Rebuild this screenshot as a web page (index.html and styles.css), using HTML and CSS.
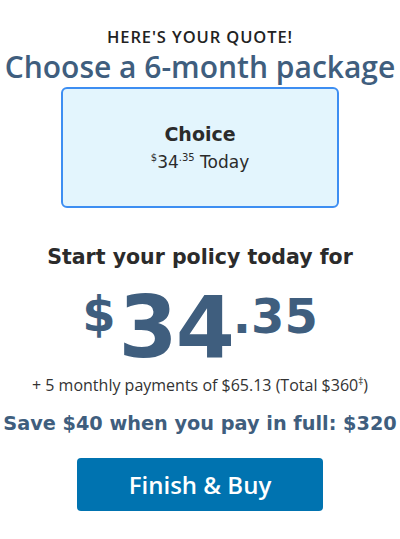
FILE: index.html
```html
<!DOCTYPE html>
<html lang="en">
<head>
	<meta charset="UTF-8">
	<title>Your Quote</title>
	<link rel="stylesheet" href="styles.css">
</head>
<body>
	<div id="quote">
		<div class="eyebrow">HERE'S YOUR QUOTE!</div>
		<h1 class="title">Choose a 6-month package</h1>

		<div class="package selected">
			<div class="package-name">Choice</div>
			<div class="package-price"><sup>$</sup>34<sup>.35</sup> Today</div>
		</div>

		<div class="start-msg">Start your policy today for</div>
		<div class="big-price"><span class="cur">$</span><span class="dollars">34</span><span class="cents">.35</span></div>
		<div class="payments">+ 5 monthly payments of $65.13 (Total $360<sup>&Dagger;</sup>)</div>
		<div class="save-msg">Save $40 when you pay in full: $320</div>

		<button class="buy-btn">Finish &amp; Buy</button>
	</div>
</body>
</html>
```

FILE: styles.css
```css
body {
	margin: 0;
	background: #ffffff;
}

#quote {
	display: flex;
	flex-direction: column;
	align-items: center;
	padding-top: 26px;
	text-align: center;
}

.eyebrow {
	font-family: "Open Sans", sans-serif;
	font-size: 16.5px;
	font-weight: 600;
	letter-spacing: 0.9px;
	color: #222222;
	line-height: 22px;
}

.title {
	margin: -1px 0 0 0;
	font-family: "Open Sans", sans-serif;
	font-size: 30px;
	font-weight: 600;
	color: #3f5e7e;
	line-height: 40px;
	white-space: nowrap;
}

.package {
	box-sizing: border-box;
	width: 278px;
	height: 121px;
	display: flex;
	flex-direction: column;
	justify-content: center;
	border: 2px solid #3d8ef2;
	border-radius: 6px;
	background: #e3f5fd;
	font-family: "DejaVu Sans", sans-serif;
	color: #2b2b2b;
}

.package-name {
	font-size: 19px;
	font-weight: bold;
	line-height: 24px;
}

.package-price {
	font-size: 17px;
	line-height: 24px;
}

.package-price sup {
	font-size: 10px;
}

.start-msg {
	margin-top: 35px;
	font-family: "DejaVu Sans", sans-serif;
	font-size: 20.5px;
	font-weight: bold;
	color: #2b2b2b;
	line-height: 28px;
}

.big-price {
	margin-top: 14px;
	font-family: "DejaVu Sans", sans-serif;
	font-weight: bold;
	color: #3f5e7e;
	display: flex;
	align-items: flex-start;
	line-height: 1;
}

.big-price .cur {
	font-size: 48px;
	margin-top: 5px;
	margin-right: 3px;
}

.big-price .dollars {
	font-size: 85px;
	letter-spacing: -2px;
}

.big-price .cents {
	font-size: 48px;
	margin-top: 7px;
}

.payments {
	margin-top: 0;
	font-family: "Open Sans", sans-serif;
	font-size: 16px;
	color: #333333;
	line-height: 22px;
}

.payments sup {
	font-size: 10px;
}

.save-msg {
	margin-top: 16px;
	font-family: "DejaVu Sans", sans-serif;
	font-size: 19.3px;
	font-weight: bold;
	color: #3f5e7e;
	line-height: 24px;
	white-space: nowrap;
}

.buy-btn {
	margin-top: 22px;
	width: 246px;
	height: 53px;
	border: none;
	border-radius: 4px;
	background: #0073b0;
	color: #ffffff;
	font-family: "Open Sans", sans-serif;
	font-size: 24px;
	font-weight: 600;
	cursor: pointer;
}
```
